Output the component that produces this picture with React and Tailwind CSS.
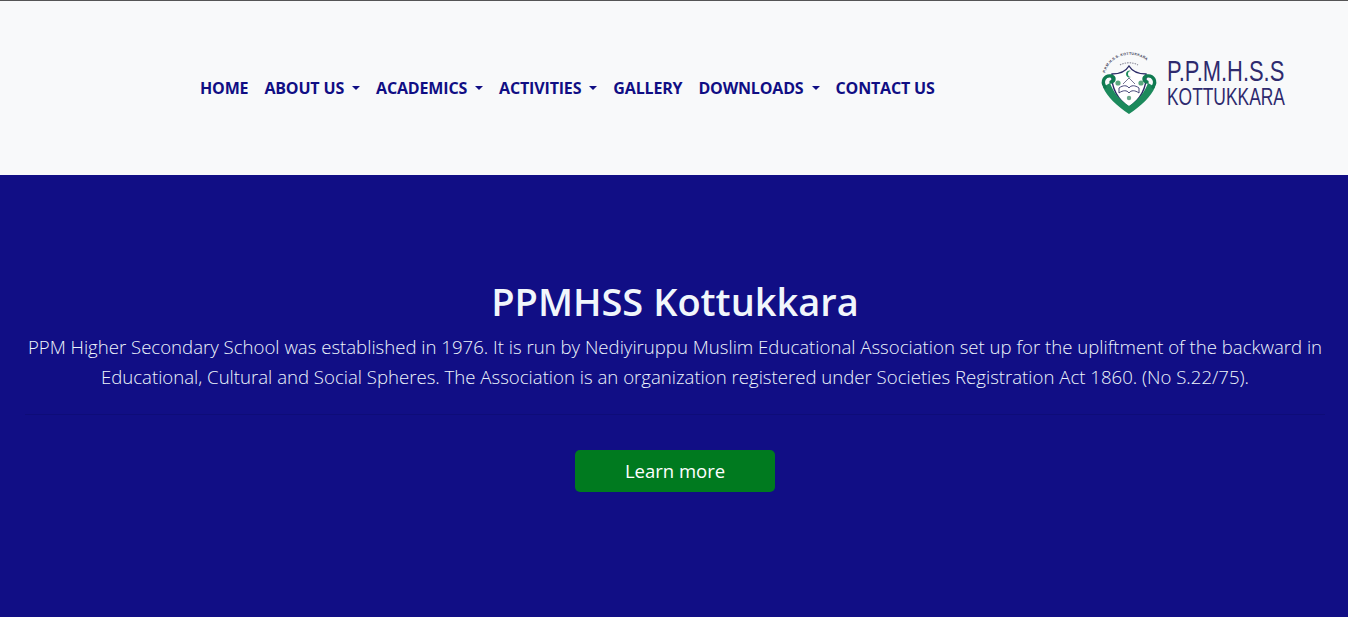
import React from "react";

const links = [
  { label: "HOME" },
  { label: "ABOUT US", caret: true },
  { label: "ACADEMICS", caret: true },
  { label: "ACTIVITIES", caret: true },
  { label: "GALLERY" },
  { label: "DOWNLOADS", caret: true },
  { label: "CONTACT US" },
];

function Crest() {
  return (
    <svg width="64" height="68" viewBox="0 0 64 68" className="shrink-0">
      <defs>
        <path id="crest-arc" d="M5 23 C 12 -1, 46 -1, 54 21" />
      </defs>
      <text fontSize="3.6" fontWeight="700" fill="#3a3a55" fontFamily="Liberation Sans, sans-serif" letterSpacing="0.2">
        <textPath href="#crest-arc">P.P.M.H.S.S. KOTTUKKARA</textPath>
      </text>
      <path d="M20 15 C 25 12, 33 12, 38 15" fill="none" stroke="#8a8a9a" strokeWidth="1.1" strokeDasharray="1.5 1" />
      {/* shield */}
      <path d="M12 24 C 20 24, 26 21, 29 16 C 32 21, 38 24, 46 24 C 47 38, 40 50, 29 57 C 18 50, 11 38, 12 24 Z" fill="#fff" stroke="#2a2a66" strokeWidth="1.4" />
      {/* green band */}
      <path d="M3 37 C 7 47, 17 56, 29 64 C 41 56, 51 47, 55 37 L 48 33 C 45 42, 38 50, 29 56 C 20 50, 13 42, 10 33 Z" fill="#1c8a5c" />
      {/* scrolls */}
      <path d="M5 37 C 1 31, 5 25, 11 26 C 15 27, 15 31, 11 32" fill="none" stroke="#0f7a50" strokeWidth="3.4" strokeLinecap="round" />
      <path d="M53 37 C 57 31, 53 25, 47 26 C 43 27, 43 31, 47 32" fill="none" stroke="#0f7a50" strokeWidth="3.4" strokeLinecap="round" />
      {/* crescent */}
      <path d="M31 21 A 3.4 3.4 0 1 0 31 27 A 2.8 2.8 0 1 1 31 21 Z" fill="#1c8a5c" />
      {/* open book */}
      <path d="M19 38 C 23 35, 27 35, 29 38 C 31 35, 35 35, 39 38 L 39 43 C 35 40, 31 40, 29 43 C 27 40, 23 40, 19 43 Z" fill="#fff" stroke="#33336a" strokeWidth="0.9" />
      <path d="M23 34 L 29 28 L 35 34" fill="none" stroke="#55557a" strokeWidth="0.8" />
      {/* side emblems */}
      <circle cx="18" cy="33" r="2.6" fill="#5aa77f" />
      <circle cx="41" cy="33" r="2.6" fill="#5aa77f" />
      <circle cx="29" cy="48" r="2.2" fill="#6aa88a" />
    </svg>
  );
}

function Logo() {
  return (
    <div className="flex items-center gap-[3px] w-[186px]">
      <Crest />
      <div className="font-['Liberation_Sans',sans-serif] text-[#2e2a6e] leading-none pb-[2px]">
        <div className="text-[30px] h-[30px] w-[119px] origin-left scale-x-[0.73] whitespace-nowrap">P.P.M.H.S.S</div>
        <div className="text-[23.5px] h-[24px] w-[119px] origin-left scale-x-[0.74] whitespace-nowrap">KOTTUKKARA</div>
      </div>
    </div>
  );
}

export default function App() {
  return (
    <div className="min-h-[617px] bg-[#110e85] font-['Open_Sans',sans-serif]">
      <header className="h-[175px] bg-[#f8f9fa] border-t border-[#555] flex items-center">
        <nav className="ml-[192px] flex items-center">
          {links.map((l) => (
            <a key={l.label} href="#" className="flex items-center px-2 text-[16px] leading-6 font-bold tracking-[-0.16px] text-[#100e84] whitespace-nowrap">
              {l.label}
              {l.caret && (
                <span className="ml-[8px] w-0 h-0 border-t-[4px] border-x-[4px] border-t-[#100e84] border-x-transparent" />
              )}
            </a>
          ))}
        </nav>
        <div className="ml-auto mr-[62px] -mt-[8px]">
          <Logo />
        </div>
      </header>

      <main className="flex flex-col items-center pl-[25px] pr-[23px] pt-[101px]">
        <h1 className="text-[38px] leading-[50px] font-semibold text-[#f1f6fb]">PPMHSS Kottukkara</h1>
        <p className="mt-[6px] text-[18.6px] leading-[30px] font-light text-[#eef6fc] text-center w-full whitespace-nowrap">
          PPM Higher Secondary School was established in 1976. It is run by Nediyiruppu Muslim Educational Association set up for the upliftment of the backward in
          <br />
          Educational, Cultural and Social Spheres. The Association is an organization registered under Societies Registration Act 1860. (No S.22/75).
        </p>
        <hr className="w-full mt-[22px] border-t border-[#0e0c78]" />
        <a href="#" className="mt-[35px] w-[200px] h-[42px] flex items-center justify-center rounded-[5px] bg-[#007a1f] text-white text-[18.5px]">
          Learn more
        </a>
      </main>
    </div>
  );
}
